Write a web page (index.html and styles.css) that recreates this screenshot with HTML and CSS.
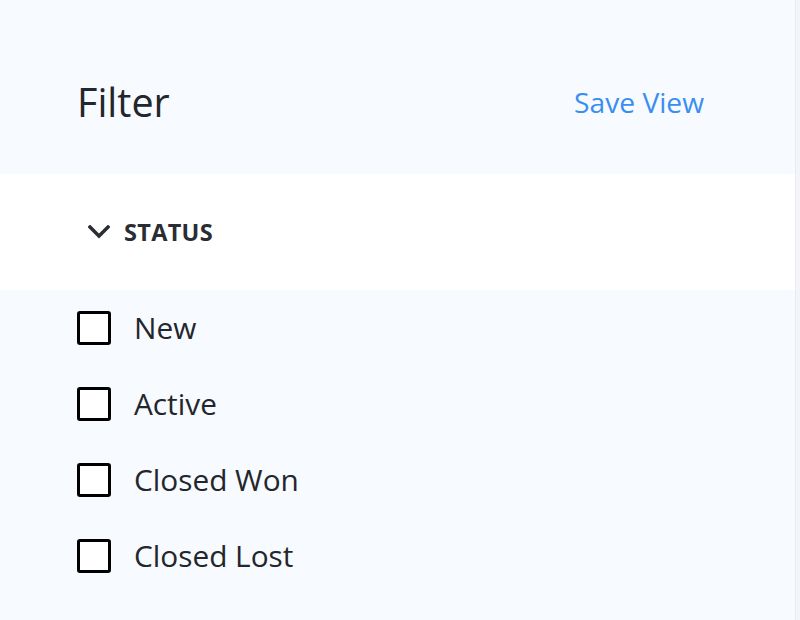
FILE: index.html
```html
<!DOCTYPE html>
<html>
<head>
<meta charset="utf-8">
<link rel="stylesheet" href="styles.css">
</head>
<body>
<div class="panel">
  <header class="head">
    <h1 class="title">Filter</h1>
    <a class="save">Save View</a>
  </header>
  <div class="section">
    <svg class="chev" width="22" height="14" viewBox="0 0 22 14"><path d="M2 2 L11 11 L20 2" fill="none" stroke="#2a2d33" stroke-width="3.4" stroke-linecap="square"/></svg>
    <span class="section-label">STATUS</span>
  </div>
  <ul class="list">
    <li class="item"><span class="box"></span><span class="label">New</span></li>
    <li class="item"><span class="box"></span><span class="label">Active</span></li>
    <li class="item"><span class="box"></span><span class="label">Closed Won</span></li>
    <li class="item"><span class="box"></span><span class="label">Closed Lost</span></li>
  </ul>
</div>
</body>
</html>
```
FILE: styles.css
```css
html, body {
  margin: 0;
  padding: 0;
  height: 100%;
}
body {
  background: #f3f5f8;
  font-family: "Open Sans", "Noto Sans", sans-serif;
  color: #23262b;
}
.panel {
  width: 795px;
  height: 620px;
  background: #f7fafe;
  border-right: 1px solid #e9ecf0;
  overflow: hidden;
}
.head {
  height: 174px;
  box-sizing: border-box;
  display: flex;
  align-items: center;
  justify-content: space-between;
  padding: 0 91px 0 77px;
}
.title {
  margin: 0;
  font-size: 39.5px;
  font-weight: 400;
  position: relative;
  top: 15px;
}
.save {
  color: #3a8ef0;
  font-size: 28.2px;
  position: relative;
  top: 15px;
}
.section {
  height: 116px;
  background: #ffffff;
  display: flex;
  align-items: center;
  padding-left: 88px;
  gap: 14px;
}
.chev { display: block; }
.section-label {
  font-weight: 700;
  font-size: 23.5px;
  letter-spacing: 0.3px;
  color: #2a2d33;
}
.list {
  list-style: none;
  margin: 0;
  padding: 21px 0 0 77px;
  display: flex;
  flex-direction: column;
  gap: 42px;
}
.item {
  display: flex;
  align-items: center;
  gap: 23px;
  height: 34px;
}
.box {
  width: 28px;
  height: 28px;
  border: 3px solid #000;
  border-radius: 3px;
  background: #fff;
  flex: none;
}
.label {
  font-size: 29.8px;
  color: #23262b;
  position: relative;
  top: -1px;
}
```
